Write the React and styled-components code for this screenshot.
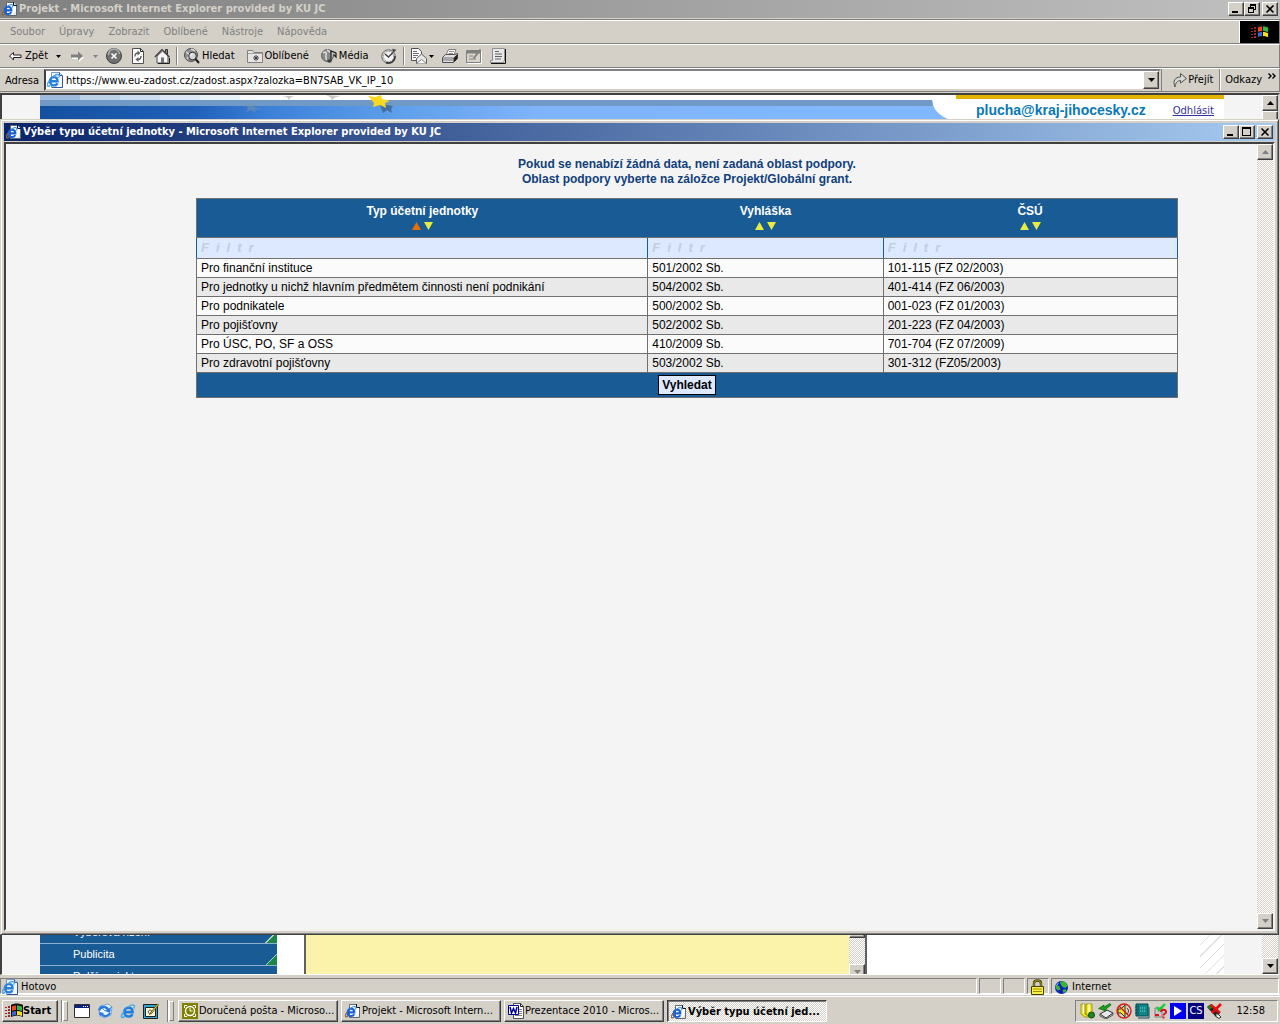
import React from "react";
import styled, { createGlobalStyle, css } from "styled-components";

const FACE = "#d4d0c8";
const SHADOW = "#808080";
const DARK = "#404040";
const NAVY = "#195b95";
const GRID = "#707070";
const UI_FONT = `"DejaVu Sans Condensed", "DejaVu Sans", sans-serif`;
const PAGE_FONT = `"Liberation Sans", Arial, sans-serif`;

const GlobalStyle = createGlobalStyle`
  * {
    box-sizing: border-box;
  }
  body {
    margin: 0;
    background: ${FACE};
    font: 11px/14px ${UI_FONT};
    color: #000;
  }
  button, input {
    margin: 0;
    padding: 0;
    border: 0;
    border-radius: 0;
    background: none;
    font: inherit;
    color: inherit;
  }
`;

const raised = css`
  border: 1px solid;
  border-color: #fff ${DARK} ${DARK} #fff;
  box-shadow: inset -1px -1px 0 ${SHADOW};
  background: ${FACE};
`;

const sunken = css`
  border: 1px solid;
  border-color: ${SHADOW} #fff #fff ${SHADOW};
`;

const dither = css`
  background: repeating-conic-gradient(#fff 0 25%, ${FACE} 0 50%) 0 0 / 2px 2px;
`;

const Desktop = styled.div`
  position: relative;
  display: flex;
  flex-direction: column;
  min-height: 100vh;
  overflow: hidden;
`;

const MainWindow = styled.div`
  flex: 1;
  display: flex;
  flex-direction: column;
`;

const TitleBar = styled.header`
  display: flex;
  align-items: center;
  gap: 1px;
  height: 18px;
  padding: 0 2px;
  background: ${props =>
    props.$active
      ? "linear-gradient(90deg, #0a246a, #a6caf0)"
      : "linear-gradient(90deg, #808080, #c0c0c0)"};
  color: ${props => (props.$active ? "#fff" : FACE)};
`;

const TitleText = styled.h1`
  flex: 1;
  margin: 0;
  font-size: 11px;
  font-weight: bold;
  white-space: nowrap;
`;

const WindowButton = styled.button`
  ${raised}
  display: grid;
  place-items: center;
  width: 16px;
  height: 14px;
  color: #000;
  margin-left: ${props => (props.$apart ? "1px" : "-1px")};
`;

const Icon = styled.svg.attrs(props => ({
  viewBox: props.viewBox || "0 0 16 16",
  "aria-hidden": true,
}))`
  display: block;
  flex: none;
  width: ${props => props.$w || 16}px;
  height: ${props => props.$h || 16}px;
`;

const Band = styled.div`
  display: flex;
  align-items: stretch;
  height: 24px;
  border-top: 1px solid #fff;
  border-bottom: 1px solid ${SHADOW};
  border-right: 1px solid ${SHADOW};
`;

const MenuBand = styled(Band)`
  margin-top: 2px;
  box-shadow: 0 -1px 0 ${SHADOW};
`;

const MenuItem = styled.button`
  padding: 0 7px;
  color: ${SHADOW};

  &:first-child {
    margin-left: 3px;
  }
`;

const Throbber = styled.div`
  display: grid;
  place-items: center;
  width: 40px;
  margin-left: auto;
  border-left: 1px solid #fff;
  background: #000;
`;

const ToolButton = styled.button`
  display: flex;
  align-items: center;
  gap: 2px;
  padding: 0 4px;
  padding-right: ${props => (props.$labelled ? "8px" : "4px")};
  white-space: nowrap;

  &:first-child {
    margin-left: 3px;
  }
`;

const Separator = styled.span`
  width: 2px;
  margin: 2px;
  border-left: 1px solid ${SHADOW};
  border-right: 1px solid #fff;
`;

const AddressLabel = styled.label`
  padding: 5px 5px 0;
`;

const AddressBox = styled.div`
  flex: 1;
  display: flex;
  align-items: center;
  gap: 3px;
  height: 22px;
  border: 2px solid;
  border-color: ${SHADOW} ${FACE} ${FACE} ${DARK};
  padding-left: 1px;
  background: #fff;
`;

const AddressInput = styled.input`
  flex: 1;
  min-width: 0;
  padding-top: 1px;
  outline: 0;
`;

const DropButton = styled.button`
  ${raised}
  display: grid;
  place-items: center;
  width: 16px;
  height: 18px;
`;

const GoButton = styled.button`
  display: flex;
  align-items: center;
  padding: 0 6px 0 10px;
  border-left: 1px solid ${SHADOW};
  border-right: 1px solid ${SHADOW};
`;

const LinksButton = styled.button`
  display: flex;
  gap: 6px;
  padding: 4px 3px 0 4px;
  border-left: 1px solid #fff;
`;

const Viewport = styled.div`
  flex: 1;
  display: flex;
  margin: 1px 0 0;
  border: solid;
  border-width: 2px 2px 1px 2px;
  border-color: ${DARK} ${FACE} #fff ${DARK};
  background: #f4f4f4;
`;

const Page = styled.div`
  flex: 1;
  display: flex;
  flex-direction: column;
  margin: 0 38px;
  background: #fff;
  overflow: hidden;
`;

const Banner = styled.div`
  display: flex;
  height: 25px;
`;

const BannerArt = styled.svg`
  flex: 1;
  min-width: 0;
  height: 25px;
`;

const Account = styled.div`
  display: flex;
  align-items: center;
  justify-content: space-between;
  width: 268px;
  padding: 0 10px 0 20px;
  border-top: 4px solid #e0b400;
`;

const Mail = styled.strong`
  font: bold 14px/18px ${PAGE_FONT};
  color: #0878b8;
`;

const Logout = styled.a`
  font: 10px/14px "DejaVu Sans", sans-serif;
  color: #333399;
  padding-top: 2px;
`;

const PageBody = styled.div`
  flex: 1;
  display: flex;
  align-items: stretch;
  overflow: hidden;
`;

const SideNav = styled.nav`
  display: flex;
  flex-direction: column;
  justify-content: flex-end;
  width: 237px;
  margin-bottom: -14px;
`;

const SideLink = styled.a`
  height: 22px;
  padding: 3px 0 0 33px;
  border-bottom: 1px solid #8fb0d0;
  background: linear-gradient(
      135deg,
      transparent 50%,
      #b8ccc0 50%,
      #b8ccc0 55%,
      #188848 55%
    )
    right bottom / 12px 12px no-repeat ${NAVY};
  font: 11px/14px ${PAGE_FONT};
  color: #fff;
  text-decoration: none;
`;

const YellowPane = styled.div`
  display: flex;
  justify-content: flex-end;
  width: 563px;
  margin-left: 27px;
  border-left: 2px solid #606060;
  border-right: 2px solid #606060;
  background: #fbf3aa;
`;

const Hatch = styled.div`
  width: 24px;
  margin-left: auto;
  background: repeating-linear-gradient(
    135deg,
    #fff 0 7px,
    #e0e0e0 7px 8px
  );
`;

const ScrollTrack = styled.div`
  ${dither}
  display: flex;
  flex-direction: column;
  justify-content: space-between;
  width: 16px;
  margin-bottom: ${props => (props.$cut ? "-6px" : 0)};
`;

const ScrollButton = styled.button`
  ${raised}
  display: grid;
  place-items: center;
  width: 16px;
  height: 16px;
`;

const ScrollEnd = styled.div`
  display: flex;
  flex-direction: column;
`;

const Thumb = styled.div`
  ${raised}
  height: ${props => props.$size}px;
`;

const StatusBar = styled.footer`
  display: flex;
  gap: 2px;
  height: 20px;
  padding: 3px 1px 0 0;
  border-bottom: 1px solid #fff;
`;

const StatusCell = styled.div`
  ${sunken}
  display: flex;
  align-items: center;
  gap: 3px;
  width: ${props => props.$width || 22}px;
  flex-grow: ${props => (props.$grow ? 1 : 0)};
  padding: 1px 1px 0;
`;

const Taskbar = styled.footer`
  display: flex;
  align-items: center;
  height: 29px;
  padding: 2px 2px 0;
  border-top: 1px solid ${FACE};
  box-shadow: inset 0 1px 0 #fff;
`;

const StartButton = styled.button`
  ${raised}
  display: flex;
  align-items: center;
  width: 56px;
  height: 22px;
  padding: 0 2px;
  font-weight: bold;
`;

const Grip = styled.span`
  display: flex;
  justify-content: flex-end;
  align-items: center;
  width: 7px;
  height: 22px;
  margin-left: 3px;
  border-left: 1px solid ${SHADOW};
  box-shadow: inset 1px 0 0 #fff;

  &::after {
    content: "";
    width: 3px;
    height: 18px;
    border: 1px solid;
    border-color: #fff ${SHADOW} ${SHADOW} #fff;
  }
`;

const QuickLaunch = styled.div`
  display: flex;
  gap: 7px;
  padding: 0 5px 0 6px;
`;

const TaskList = styled.div`
  flex: 1;
  display: flex;
  gap: 3px;
  padding-left: 4px;
`;

const TaskButton = styled.button`
  ${raised}
  display: flex;
  align-items: center;
  gap: 1px;
  width: 160px;
  height: 22px;
  padding: 0 3px;
  text-align: left;
  white-space: nowrap;

  ${props =>
    props.$pressed &&
    css`
      ${dither}
      padding-top: 2px;
      border-color: ${DARK} #fff #fff ${DARK};
      box-shadow: inset 1px 1px 0 ${SHADOW};
      font-weight: bold;
    `}
`;

const Tray = styled.div`
  ${sunken}
  display: flex;
  align-items: center;
  gap: 2px;
  width: 203px;
  height: 22px;
  padding: 0 12px 0 4px;
`;

const LangBadge = styled.span`
  width: 16px;
  height: 16px;
  background: #000080;
  color: #fff;
  text-align: center;
  line-height: 16px;
`;

const Clock = styled.time`
  margin-left: auto;
`;

const Popup = styled.section`
  position: absolute;
  top: 119px;
  right: 1px;
  bottom: 89px;
  left: 0;
  display: flex;
  flex-direction: column;
  padding: 3px;
  border: 1px solid;
  border-color: ${FACE} ${DARK} ${DARK} ${FACE};
  box-shadow: inset 1px 1px 0 #fff, inset -1px -1px 0 ${SHADOW};
  background: ${FACE};
`;

const PopupView = styled.div`
  flex: 1;
  display: flex;
  margin-top: 1px;
  border: 2px solid;
  border-color: ${DARK} #f4f2ee #f4f2ee ${DARK};
  background: #f4f4f4;
`;

const PopupPage = styled.main`
  flex: 1;
  padding: 13px 79px 0 190px;
  font: 12px/15px ${PAGE_FONT};
`;

const Notice = styled.p`
  margin: 0 0 11px;
  font-weight: bold;
  text-align: center;
  color: #103f7c;
`;

const Grid = styled.table`
  width: 100%;
  table-layout: fixed;
  border-collapse: collapse;
  border: 1px solid ${GRID};
`;

const HeadCell = styled.th`
  width: ${props => props.$width};
  height: 39px;
  padding: 5px 0 3px;
  border-bottom: 1px solid ${GRID};
  background: ${NAVY};
  color: #fff;
`;

const SortButtons = styled.div`
  display: flex;
  justify-content: center;
  gap: 3px;
  height: 15px;
  padding: 3px 0 4px;
`;

const SortButton = styled.button`
  display: block;
  color: ${props => (props.$on ? "#e87000" : "#e8ec40")};
`;

const FilterCell = styled.td`
  height: 21px;
  padding: 0 4px;
  border: 1px solid ${NAVY};
  border-top-color: ${GRID};
  border-bottom-color: ${GRID};
  background: #dde9ff;
`;

const FilterInput = styled.input`
  display: block;
  width: 100%;
  height: 18px;
  outline: 0;

  &::placeholder {
    font: italic bold 13px/18px ${PAGE_FONT};
    letter-spacing: 7px;
    color: #c3cde0;
  }
`;

const Row = styled.tr`
  background: #fbfbfb;

  &:nth-child(odd) {
    background: #e9e9e9;
  }
`;

const Cell = styled.td`
  height: 19px;
  padding: 0 4px;
  border: 1px solid ${GRID};
  line-height: 18px;
`;

const FootCell = styled.td`
  height: 25px;
  padding: 0;
  background: ${NAVY};
  text-align: center;
`;

const SearchButton = styled.button`
  display: block;
  height: 20px;
  margin: 0 auto;
  padding: 0 3px;
  border: 1px solid #000;
  background: #dde9ff;
  font-weight: bold;
`;

const COLUMNS = [
  { title: "Typ účetní jednotky", width: "46%", sorted: true },
  { title: "Vyhláška", width: "24%" },
  { title: "ČSÚ", width: "30%" },
];

const ROWS = [
  ["Pro finanční instituce", "501/2002 Sb.", "101-115 (FZ 02/2003)"],
  [
    "Pro jednotky u nichž hlavním předmětem činnosti není podnikání",
    "504/2002 Sb.",
    "401-414 (FZ 06/2003)",
  ],
  ["Pro podnikatele", "500/2002 Sb.", "001-023 (FZ 01/2003)"],
  ["Pro pojišťovny", "502/2002 Sb.", "201-223 (FZ 04/2003)"],
  ["Pro ÚSC, PO, SF a OSS", "410/2009 Sb.", "701-704 (FZ 07/2009)"],
  ["Pro zdravotní pojišťovny", "503/2002 Sb.", "301-312 (FZ05/2003)"],
];

const MENU = ["Soubor", "Úpravy", "Zobrazit", "Oblíbené", "Nástroje", "Nápověda"];

function Triangle({ up, w = 7, h = 4, color = "currentColor" }) {
  return (
    <Icon viewBox={`0 0 ${w} ${h}`} $w={w} $h={h}>
      <path
        d={up ? `M0 ${h}H${w}L${w / 2} 0z` : `M0 0H${w}L${w / 2} ${h}z`}
        fill={color}
      />
    </Icon>
  );
}

function ELetter({ color = "#1c6cd8", ring = "#58a8f0", tail = ring }) {
  return (
    <g fill="none">
      <path
        d="M3.8 8.6h7.6C11.4 5.9 9.8 4.4 7.6 4.4S3.6 6.2 3.6 8.6s1.7 4.2 4 4.2c1.7 0 3-.8 3.6-2.2"
        stroke={color}
        strokeWidth="2.4"
      />
      <path d="M6.5 4C9 2 11.800 1.400 12.800 2.400c.8.8.4 1.800-.4 2.800" stroke={ring} strokeWidth="1.300" />
      <path d="M4 12.800C2 14.200.6 14 1 12c.3-1.400 1-2.600 2-3.800" stroke={tail} strokeWidth="1.500" />
    </g>
  );
}

// document icon used in title bars and task buttons
function IePageIcon() {
  return (
    <Icon>
      <path d="M4.500 1.500h7l3 3v10h-10z" fill="#fff" stroke="#606878" />
      <path d="M11.500 1v3.500h3.500" fill="#d0d8e0" stroke="#101820" />
      <path d="M14 8v6H8c4 0 6-3 6-6z" fill="#e0ecd8" />
      <g transform="translate(-.4 2) scale(.86)">
        <ELetter color="#1860d8" ring="#3890e8" tail="#906838" />
      </g>
    </Icon>
  );
}

function IeSiteIcon() {
  return (
    <Icon>
      <path d="M4.500.5h8l3 3v12h-11z" fill="#f0f6ff" stroke="#7898c8" />
      <path d="M12.500.5v3h3" fill="#b8d0f0" stroke="#385898" />
      <path d="M15.500 4v11.500H5" fill="none" stroke="#385898" />
      <g transform="translate(-.6 .8) scale(.98)">
        <ELetter color="#2880d8" ring="#50a8f0" />
      </g>
    </Icon>
  );
}

function IeIcon() {
  return (
    <Icon>
      <g transform="translate(.5 0) scale(1.060)">
        <ELetter color="#2080e0" ring="#48a8f0" />
      </g>
    </Icon>
  );
}

function FlagIcon() {
  return (
    <Icon $w={18} $h={16} viewBox="0 0 18 16">
      <path
        d="M0 4h2v1H0zM3 3h2v2H3zM0 7h2v1H0zM3 6h2v2H3zM0 10h2v1H0zM3 9h2v2H3zM0 13h2v1H0zM3 12h2v2H3z"
        fill="#a02828"
      />
      <path d="M6 2c3-2 8-2 12 0v12c-4-2-8-2-12 0z" fill="#101010" />
      <path d="M7 3.500c1.500-1 3-1 4-1v4.500c-1 0-3 0-4 1z" fill="#f04820" />
      <path d="M12 2.500c1.500 0 3.500.5 5 1v4.500c-1.500-.5-3.500-1-5-1z" fill="#38b838" />
      <path d="M7 9c1.500-1 3-1 4-1v4c-1 0-3 0-4 1z" fill="#3868e0" />
      <path d="M12 8c1.500 0 3.500.5 5 1v4c-1.500-.5-3.500-1-5-1z" fill="#f8e020" />
    </Icon>
  );
}

const BackIcon = () => (
  <Icon>
    <path
      d="M2.500 8 6.500 4.500V7h7.500v2.500H6.500V12z"
      fill="#fff"
      stroke="#202020"
    />
  </Icon>
);

const ForwardIcon = () => (
  <Icon>
    <path d="M15 9 10 14v-3H3V8" fill="#fff" />
    <path d="M14 8 9 3.500V6.500H2v3h7v3z" fill="#808080" />
  </Icon>
);

const StopIcon = () => (
  <Icon>
    <circle cx="8" cy="8" r="7.500" fill="#707070" stroke="#404040" />
    <path d="M2.500 7a5.500 5.500 0 0 1 11-1" fill="none" stroke="#b0b0b0" strokeWidth="1.500" />
    <path d="m5.500 5.500 5 5m0-5-5 5" stroke="#fff" strokeWidth="1.600" />
  </Icon>
);

const RefreshIcon = () => (
  <Icon>
    <path d="M2.500.5h8l3 3v12h-11z" fill="#fff" stroke="#505050" />
    <path d="M10.500.5v3h3" fill="none" stroke="#202020" />
    <path d="M8 5c-2.500 0-3 1.500-3 3.500M8 11.500c2.500 0 3-1.500 3-3.500" fill="none" stroke="#606060" strokeWidth="1.400" />
    <path d="M7.500 2.500v5l3-2.500zM8.500 9v5l-3-2.500z" fill="#606060" />
  </Icon>
);

const HomeIcon = () => (
  <Icon>
    <path d="M11.500 1.500h2v5h-2z" fill="#888" stroke="#303030" />
    <path d="M3 8v7h11V8L8.500 3z" fill="#f4f4f4" stroke="#505050" />
    <path d="M.8 9 8 1.500 15.500 9" fill="none" stroke="#404040" strokeWidth="1.200" />
    <path d="M7 9.500h3v5.500H7z" fill="#707070" />
    <path d="M4 15.500h11.500V10" fill="none" stroke="#202020" />
  </Icon>
);

const SearchIcon = () => (
  <Icon>
    <circle cx="7" cy="7" r="6.500" fill="#909090" stroke="#505050" />
    <path d="M2 4c3 1 2 3 4 3M3 11c1-3 3-2 3-4M7 1c2 1 3 1 4 2" stroke="#d8d8d8" fill="none" strokeWidth="1.500" />
    <circle cx="8.500" cy="8" r="3.800" fill="#d8d8d8" stroke="#303030" />
    <path d="M6.500 8c0-1 1-2 2-2" stroke="#fff" fill="none" />
    <path d="m11.500 11 3.500 4" stroke="#202020" strokeWidth="2" />
  </Icon>
);

const FavoritesIcon = () => (
  <Icon>
    <path d="M.5 14.500v-12h5l1.500 2h8.500v10z" fill="#e4e4e4" stroke="#808080" />
    <path d="M1 5.500h14" stroke="#a0a0a0" />
    <path d="M9 7v6M6 10h6M7 8l4 4m0-4-4 4" stroke="#303030" strokeWidth=".9" />
  </Icon>
);

const MediaIcon = () => (
  <Icon>
    <circle cx="6.500" cy="7.500" r="6" fill="#888" stroke="#606060" />
    <path d="M2 5c3-2 4 0 3 2s1 3 0 5M6 2l3 2" fill="none" stroke="#d8d8d8" strokeWidth="1.600" />
    <path d="M10 13V3l5 2v4l-2.500-2.500" fill="#c0c0c0" stroke="#202020" strokeWidth="1.200" />
    <ellipse cx="8.500" cy="13" rx="2.200" ry="1.800" fill="#404040" />
  </Icon>
);

const HistoryIcon = () => (
  <Icon>
    <circle cx="7.500" cy="8.500" r="6.800" fill="#c8c8c8" stroke="#707070" />
    <circle cx="7.500" cy="8.500" r="5" fill="#f4f4f4" stroke="#808080" strokeDasharray="1 1.600" />
    <path d="m4 6 3.500 3L12 4.500" fill="none" stroke="#404040" strokeWidth="1.400" />
    <path d="m11 .8 4.500 1-3 3z" fill="#484848" />
    <path d="M14 8a6.500 6.500 0 0 1-9 6.500" fill="none" stroke="#303030" strokeWidth="1.500" />
  </Icon>
);

const MailIcon = () => (
  <Icon>
    <path d="M.5.500h7l3 3v9H.5z" fill="#fff" stroke="#505050" />
    <path d="M2 3.500h4M2 5.500h6M2 7.500h5M2 9.500h3" stroke="#707070" />
    <path d="M5.500 10.500 10.500 6l5 4.500v5h-10z" fill="#e8e8e8" stroke="#606060" />
    <path d="m5.500 15.500 5-4 5 4" fill="#fff" stroke="#808080" />
  </Icon>
);

const PrintIcon = () => (
  <Icon>
    <path d="M4 7 6.500 1.500h7.500L12 7z" fill="#fff" stroke="#808080" />
    <path d="M7 3.500h5M6.500 5.500h4.500" stroke="#909090" />
    <path d="M.5 9.500 3.500 6.500h9l3-1v5l-4 4H.5z" fill="#e0e0e0" stroke="#505050" />
    <path d="M1 10h10.500M1 12h10" stroke="#707070" fill="none" />
    <path d="m11.500 10 4-4v4.500l-4 4z" fill="#202020" />
  </Icon>
);

const EditIcon = () => (
  <Icon>
    <path d="M1.500 3.500h14v12h-14z" fill="none" stroke="#fff" />
    <path d="M.5 2.500h14v12H.5z" fill="#d8d4cc" stroke="#808080" />
    <path d="M1 4h13" stroke="#808080" strokeWidth="3" />
    <path d="M3 8h4M3 11h7" stroke="#808080" />
    <path d="m7.500 10.500 7-9" stroke="#808080" strokeWidth="2" />
  </Icon>
);

const DiscussIcon = () => (
  <Icon>
    <path d="M2.500.5h12v11.500l-1 2.500h-13v-2h2z" fill="#e8e8e8" stroke="#909090" />
    <path d="M15.500 1v14.500H1" fill="none" stroke="#101010" />
    <path d="M5 3.500h4M5 6h7M5 8.500h7M5 11h6" stroke="#606060" />
  </Icon>
);

const GoIcon = () => (
  <Icon>
    <path
      d="M3 15C.5 9 3 5 8.500 5V1.500L14.500 6.500l-6 4.500V8.500C5.500 8.500 3.500 11 3 15z"
      fill="#d8d8d8"
      stroke="#505050"
    />
  </Icon>
);

const LockIcon = () => (
  <Icon>
    <path d="M5 8V4.500C5 .5 12 .5 12 4.500V8" fill="none" stroke="#404000" strokeWidth="2.400" />
    <path d="M5 8V4.500C5 .5 12 .5 12 4.500V8" fill="none" stroke="#b8a820" />
    <path d="M2.500 7.500h12v8h-12z" fill="#f8f040" stroke="#404000" />
    <path d="M4 10h9M4 12.500h9" stroke="#a09000" />
  </Icon>
);

const GlobeIcon = () => (
  <Icon>
    <circle cx="8.500" cy="8.500" r="6.500" fill="#0820b8" />
    <path d="M7 3c4-2 6 0 7.500 4l-2 2-3-1-2-3zM3.500 5.500l3 2 1 3-3 1-2-3zM9.500 11l3-1 1 2-3 2z" fill="#38b830" />
    <path d="M3.500 6.500 5.500 4" stroke="#80d0ff" />
  </Icon>
);

const DesktopIcon = () => (
  <Icon>
    <path d="M.5 1.500h15v13H.5z" fill="#fff" stroke="#303030" />
    <path d="M1 2h14v3H1z" fill="#102080" />
    <path d="M9 3.500h1m1 0h1m1 0h1" stroke="#fff" />
  </Icon>
);

const OutlookExpressIcon = () => (
  <Icon>
    <path d="m3 3 8-2 4 3-1 8-7 3-5-4z" fill="#e8f4ff" stroke="#70a8e0" />
    <path d="m3 3 5 5 7-4" fill="none" stroke="#5090d0" />
    <path d="M1 7c1-5 9-6 11-1l2-1-1 5-5-2 2-1C8 4 4 5 3 8zM14 10c-2 5-8 5-10 2l-1 2-1-5 5 1-1 1c2 2 4 1 6-1z" fill="#2878e0" />
  </Icon>
);

const NotesIcon = () => (
  <Icon>
    <path d="M.5 1.500h14v14H.5z" fill="#30a8d0" stroke="#202020" />
    <path d="M2.500 4.500h10v9h-10z" fill="#fffbd8" stroke="#202020" />
    <path d="M5 9c1-3 4-2 4 0s-3 2-4 0" fill="none" stroke="#404040" />
    <path d="M14.500.8 8 9l-1.500 2.500L9 10l6.500-8z" fill="#f8d840" stroke="#403000" strokeWidth=".7" />
  </Icon>
);

const OutlookIcon = () => (
  <Icon>
    <path d="M0 0h16v16H0z" fill="#808000" />
    <path d="M2.500 5V2.500H5M11 2.500h2.500V5M2.500 11v2.500H5M11 13.500h2.500V11" fill="none" stroke="#fff" />
    <circle cx="8" cy="8" r="4.500" fill="#808000" stroke="#fff" strokeWidth="1.400" />
    <path d="M8 5v3h2.500" fill="none" stroke="#fff" />
  </Icon>
);

const WordIcon = () => (
  <Icon>
    <path d="M5.500.5h7l3 3v12h-10z" fill="#fff" stroke="#505050" />
    <path d="M12.500.5v3h3" fill="none" stroke="#202020" />
    <path d="M11 6.500h3M11 8.500h3M11 10.500h3M7 12.500h7" stroke="#808080" />
    <path d="M.5 2.500h10v9H.5z" fill="#fff" stroke="#0000a0" />
    <path d="m2 4 1.500 6L5.500 5.500 7.500 10 9 4" fill="none" stroke="#0000a0" strokeWidth="1.500" />
  </Icon>
);

const TrayIcons = () => (
  <>
    <Icon>
      <path d="M1 1h4v10l4 3H5l-4-3zM6 1h6v10l1 3h-3l-4-3z" fill="#f0e820" stroke="#908800" strokeWidth=".8" />
      <path d="M3.500 1v9M9 1v8" stroke="#fff" strokeWidth="1.200" />
      <circle cx="11.500" cy="12" r="3" fill="#208828" stroke="#104810" />
    </Icon>
    <Icon>
      <path d="m2 11 7-4 6 3-7 5z" fill="#e8e8e8" stroke="#303030" />
      <path d="M15 10v2l-7 4-6-3v-2" fill="none" stroke="#505050" />
      <path d="M12 .5 6 4V2L.5 5.500 8 8V6l5-4z" fill="#18a018" stroke="#085808" strokeWidth=".6" />
    </Icon>
    <Icon>
      <path d="M2 6h3l4-4v12l-4-4H2z" fill="#f0e030" stroke="#303030" />
      <path d="M11 5c2 2 2 4 0 6" fill="none" stroke="#303030" />
      <circle cx="8" cy="8" r="7" fill="none" stroke="#d02010" strokeWidth="1.400" />
      <path d="m3 3 10 10" stroke="#d02010" strokeWidth="1.400" />
    </Icon>
    <Icon>
      <path d="M2 1h12v12H2z" fill="#108888" stroke="#084848" />
      <path d="M4 2v10M1 4h2M1 7h2M1 10h2M4 15h11V4" stroke="#084860" fill="none" />
      <path d="M6 5h1m1 0h1m1 0h1M6 8h1m1 0h1m1 0h1" stroke="#80e0e0" />
    </Icon>
    <Icon>
      <path d="M3 5h7v9H3z" fill="#c8c8c8" stroke="#808080" />
      <path d="m5 4 2 3 6-6" fill="none" stroke="#10d030" strokeWidth="2.400" />
      <path d="M9 9c0-3 5-3 5 0 0 2-2.500 1.500-2.500 3.500m0 1v2" fill="none" stroke="#e01020" strokeWidth="2" />
      <path d="M3 12h4" stroke="#e01020" strokeWidth="2" />
    </Icon>
    <Icon>
      <path d="M0 0h16v16H0z" fill="#0000f0" />
      <path d="M4 3v10l8-5z" fill="#fff" />
    </Icon>
    <LangBadge>CS</LangBadge>
    <Icon>
      <path d="m1 4 4-3 9 9-4 4z" fill="#202020" />
      <circle cx="4" cy="4" r="2" fill="#188818" />
      <path d="m10 10 3 2 2 2-2 1.500-3-2z" fill="#f0f0e0" stroke="#303030" />
      <path d="m5 2 9 8M15 1 6 10" stroke="#e01010" strokeWidth="2.800" />
    </Icon>
  </>
);

function Chevrons() {
  return (
    <Icon viewBox="0 0 8 6" $w={8} $h={6}>
      <path
        d="m.5.500 2.500 2.500-2.500 2.500m4-5L7 3 4.500 5.500"
        fill="none"
        stroke="#000"
        strokeWidth="1.400"
      />
    </Icon>
  );
}

function WindowButtons({ restore }) {
  return (
    <>
      <WindowButton aria-label="Minimalizovat">
        <Icon viewBox="0 0 10 10" $w={10} $h={10}>
          <path d="M1 7h6v2H1z" />
        </Icon>
      </WindowButton>
      <WindowButton aria-label={restore ? "Obnovit" : "Maximalizovat"}>
        <Icon viewBox="0 0 10 10" $w={10} $h={10}>
          {restore ? (
            <path
              d="M3 0h6v6H7v3H1V3h2zM4 2v1h3v2h1V2zM2 5v3h4V5z"
              fillRule="evenodd"
            />
          ) : (
            <path d="M0 0h9v9H0zM1 2v6h7V2z" fillRule="evenodd" />
          )}
        </Icon>
      </WindowButton>
      <WindowButton $apart aria-label="Zavřít">
        <Icon viewBox="0 0 10 10" $w={10} $h={10}>
          <path d="m1.500 1.500 7 7m0-7-7 7" stroke="#000" strokeWidth="1.600" />
        </Icon>
      </WindowButton>
    </>
  );
}

function Scrollbar({ disabled, thumb, cut }) {
  const color = disabled ? SHADOW : "#000";
  return (
    <ScrollTrack $cut={cut}>
      <ScrollEnd>
        <ScrollButton aria-label="Nahoru">
          <Triangle up color={color} />
        </ScrollButton>
        {thumb && <Thumb $size={thumb} />}
      </ScrollEnd>
      <ScrollButton aria-label="Dolů">
        <Triangle color={color} />
      </ScrollButton>
    </ScrollTrack>
  );
}

function PageBanner() {
  return (
    <Banner>
      <BannerArt viewBox="0 0 916 25" preserveAspectRatio="none" aria-hidden>
        <defs>
          <linearGradient id="sky">
            <stop offset="0" stopColor="#1450a0" />
            <stop offset=".17" stopColor="#2060b8" />
            <stop offset=".25" stopColor="#3c80d8" />
            <stop offset=".4" stopColor="#60a0ec" />
            <stop offset=".55" stopColor="#80b4fa" />
            <stop offset="1" stopColor="#80b8ff" />
          </linearGradient>
        </defs>
        {["#a0bcdc", "#bcd0e8", "#ccdcf0", "#dce6f4", "#e8f0f8", "#f6f8fc"].map(
          (fill, i) => (
            <path key={fill} d={`M${i * 40} 0h40v5h-40z`} fill={fill} />
          )
        )}
        <path d="M0 5h892c1 9 6 15 18 20H0z" fill="url(#sky)" />
        <path d="M0 5h892l1 6H0z" fill="#7099c6" />
        <path d="m204 8 6 2 5-3-1 5 8 2-7 1 1 3-5-3-5 2 2-4z" fill="#7898a8" opacity=".5" />
        <path d="m242 1 5 1 2 3 2-3 4-1zM286 0l4 2 2 3 4-3 5-1z" fill="#c8c8c4" />
        <path d="m340 10 3 8 4-3 5 3-1-4 2-3-6-1z" fill="#385c80" opacity=".7" />
        <path d="m328 1 7 1 6-2 1 4 8 2-5 2 1 5-6-3-7 2 1-4z" fill="#f8d820" />
      </BannerArt>
      <Account>
        <Mail>plucha@kraj-jihocesky.cz</Mail>
        <Logout href="#odhlasit">Odhlásit</Logout>
      </Account>
    </Banner>
  );
}

function BrowserWindow() {
  return (
    <MainWindow>
      <TitleBar>
        <IePageIcon />
        <TitleText as="div">
          Projekt - Microsoft Internet Explorer provided by KU JC
        </TitleText>
        <WindowButtons restore />
      </TitleBar>
      <MenuBand>
        {MENU.map(item => (
          <MenuItem key={item}>{item}</MenuItem>
        ))}
        <Throbber>
          <FlagIcon />
        </Throbber>
      </MenuBand>
      <Band>
        <ToolButton>
          <BackIcon />
          Zpět
        </ToolButton>
        <ToolButton aria-label="Historie zpět">
          <Triangle w={5} h={3} />
        </ToolButton>
        <ToolButton aria-label="Vpřed">
          <ForwardIcon />
        </ToolButton>
        <ToolButton aria-label="Historie vpřed">
          <Triangle w={5} h={3} color={SHADOW} />
        </ToolButton>
        <ToolButton aria-label="Zastavit">
          <StopIcon />
        </ToolButton>
        <ToolButton aria-label="Aktualizovat">
          <RefreshIcon />
        </ToolButton>
        <ToolButton aria-label="Domů">
          <HomeIcon />
        </ToolButton>
        <Separator />
        <ToolButton $labelled>
          <SearchIcon />
          Hledat
        </ToolButton>
        <ToolButton $labelled>
          <FavoritesIcon />
          Oblíbené
        </ToolButton>
        <ToolButton $labelled>
          <MediaIcon />
          Média
        </ToolButton>
        <ToolButton aria-label="Historie">
          <HistoryIcon />
        </ToolButton>
        <Separator />
        <ToolButton aria-label="Pošta">
          <MailIcon />
          <Triangle w={5} h={3} />
        </ToolButton>
        <ToolButton aria-label="Tisk">
          <PrintIcon />
        </ToolButton>
        <ToolButton aria-label="Upravit">
          <EditIcon />
        </ToolButton>
        <ToolButton aria-label="Diskuse">
          <DiscussIcon />
        </ToolButton>
      </Band>
      <Band>
        <AddressLabel htmlFor="address">Adresa</AddressLabel>
        <AddressBox>
          <IeSiteIcon />
          <AddressInput
            id="address"
            defaultValue="https://www.eu-zadost.cz/zadost.aspx?zalozka=BN7SAB_VK_IP_10"
          />
          <DropButton aria-label="Rozbalit">
            <Triangle />
          </DropButton>
        </AddressBox>
        <GoButton>
          <GoIcon />
          Přejít
        </GoButton>
        <LinksButton>
          Odkazy <Chevrons />
        </LinksButton>
      </Band>
      <Viewport>
        <Page>
          <PageBanner />
          <PageBody>
            <SideNav>
              <SideLink href="#vyberova-rizeni">Výběrová řízení</SideLink>
              <SideLink href="#publicita">Publicita</SideLink>
              <SideLink href="#dalsi-projekty">Další projekty</SideLink>
            </SideNav>
            <YellowPane>
              <Scrollbar disabled cut thumb={802} />
            </YellowPane>
            <Hatch />
          </PageBody>
        </Page>
        <Scrollbar thumb={300} />
      </Viewport>
      <StatusBar>
        <StatusCell $grow>
          <IeSiteIcon />
          Hotovo
        </StatusCell>
        <StatusCell />
        <StatusCell />
        <StatusCell>
          <LockIcon />
        </StatusCell>
        <StatusCell $width={228}>
          <GlobeIcon />
          Internet
        </StatusCell>
      </StatusBar>
    </MainWindow>
  );
}

function UnitTable() {
  return (
    <Grid>
      <thead>
        <tr>
          {COLUMNS.map(col => (
            <HeadCell key={col.title} $width={col.width}>
              {col.title}
              <SortButtons>
                <SortButton $on={col.sorted} aria-label="Vzestupně">
                  <Triangle up w={9} h={8} />
                </SortButton>
                <SortButton aria-label="Sestupně">
                  <Triangle w={9} h={8} />
                </SortButton>
              </SortButtons>
            </HeadCell>
          ))}
        </tr>
      </thead>
      <tbody>
        <tr>
          {COLUMNS.map(col => (
            <FilterCell key={col.title}>
              <FilterInput placeholder="Filtr" aria-label={col.title} />
            </FilterCell>
          ))}
        </tr>
        {ROWS.map(row => (
          <Row key={row[0]}>
            {row.map(value => (
              <Cell key={value}>{value}</Cell>
            ))}
          </Row>
        ))}
      </tbody>
      <tfoot>
        <tr>
          <FootCell colSpan={3}>
            <SearchButton>Vyhledat</SearchButton>
          </FootCell>
        </tr>
      </tfoot>
    </Grid>
  );
}

function UnitTypePopup() {
  return (
    <Popup>
      <TitleBar $active>
        <IePageIcon />
        <TitleText>
          Výběr typu účetní jednotky - Microsoft Internet Explorer provided by KU
          JC
        </TitleText>
        <WindowButtons />
      </TitleBar>
      <PopupView>
        <PopupPage>
          <Notice>
            Pokud se nenabízí žádná data, není zadaná oblast podpory.
            <br />
            Oblast podpory vyberte na záložce Projekt/Globální grant.
          </Notice>
          <UnitTable />
        </PopupPage>
        <Scrollbar disabled />
      </PopupView>
    </Popup>
  );
}

function SystemTaskbar() {
  return (
    <Taskbar>
      <StartButton>
        <FlagIcon />
        Start
      </StartButton>
      <Grip />
      <QuickLaunch>
        <DesktopIcon />
        <OutlookExpressIcon />
        <IeIcon />
        <NotesIcon />
      </QuickLaunch>
      <Grip />
      <TaskList>
        <TaskButton>
          <OutlookIcon />
          Doručená pošta - Microso...
        </TaskButton>
        <TaskButton>
          <IePageIcon />
          Projekt - Microsoft Intern...
        </TaskButton>
        <TaskButton>
          <WordIcon />
          Prezentace 2010 - Micros...
        </TaskButton>
        <TaskButton $pressed>
          <IePageIcon />
          Výběr typu účetní jed...
        </TaskButton>
      </TaskList>
      <Tray>
        <TrayIcons />
        <Clock>12:58</Clock>
      </Tray>
    </Taskbar>
  );
}

export default function App() {
  return (
    <Desktop>
      <GlobalStyle />
      <BrowserWindow />
      <UnitTypePopup />
      <SystemTaskbar />
    </Desktop>
  );
}
